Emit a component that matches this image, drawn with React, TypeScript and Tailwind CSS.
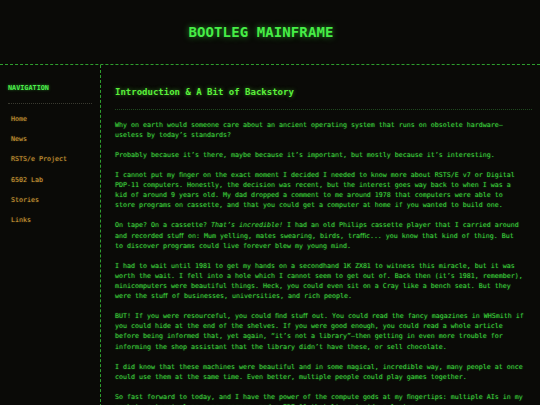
const mono = 'font-["DejaVu_Sans_Mono","Liberation_Mono",monospace]'

const navItems = ['Home', 'News', 'RSTS/e Project', '6502 Lab', 'Stories', 'Links']

function Sidebar() {
  return (
    <aside className="w-[101px] shrink-0 border-r border-dashed border-[#2e9e2e] pl-2 pr-2 pt-[18px]">
      <h2 className="text-[6.8px] leading-[10px] font-bold text-[#4cf04c] pb-[10px] border-b border-dotted border-[#3a3a30] [text-shadow:0_0_3px_rgba(80,255,80,0.5)]">
        NAVIGATION
      </h2>
      <ul className="flex flex-col gap-[10.2px] mt-[10px] pl-[3px]">
        {navItems.map(item => (
          <li key={item} className="text-[6.65px] leading-[10px] text-[#d7a23a] [text-shadow:0_0_2px_rgba(230,170,60,0.4)]">
            {item}
          </li>
        ))}
      </ul>
    </aside>
  )
}

// the original copy uses typographic ligatures (ﬁ, ﬀ, ﬃ), keep them so lines wrap the same
const paras: React.ReactNode[] = [
  'Why on earth would someone care about an ancient operating system that runs on obsolete hardware—useless by today’s standards?',
  'Probably because it’s there, maybe because it’s important, but mostly because it’s interesting.',
  'I cannot put my ﬁnger on the exact moment I decided I needed to know more about RSTS/E v7 or Digital PDP-11 computers. Honestly, the decision was recent, but the interest goes way back to when I was a kid of around 9 years old. My dad dropped a comment to me around 1978 that computers were able to store programs on cassette, and that you could get a computer at home if you wanted to build one.',
  <>On tape? On a cassette? <em>That’s incredible!</em> I had an old Philips cassette player that I carried around and recorded stuﬀ on: Mum yelling, mates swearing, birds, traﬃc... you know that kind of thing. But to discover programs could live forever blew my young mind.</>,
  'I had to wait until 1981 to get my hands on a secondhand 1K ZX81 to witness this miracle, but it was worth the wait. I fell into a hole which I cannot seem to get out of. Back then (it’s 1981, remember), minicomputers were beautiful things. Heck, you could even sit on a Cray like a bench seat. But they were the stuﬀ of businesses, universities, and rich people.',
  'BUT! If you were resourceful, you could ﬁnd stuﬀ out. You could read the fancy magazines in WHSmith if you could hide at the end of the shelves. If you were good enough, you could read a whole article before being informed that, yet again, “it’s not a library”—then getting in even more trouble for informing the shop assistant that the library didn’t have these, or sell chocolate.',
  'I did know that these machines were beautiful and in some magical, incredible way, many people at once could use them at the same time. Even better, multiple people could play games together.',
  'So fast forward to today, and I have the power of the compute gods at my ﬁngertips: multiple AIs in my pocket, a terminal on every screen, and a PDP-11 that lives inside a laptop.',
]

export default function App() {
  return (
    <div className={`${mono} min-h-screen bg-[#0a0a07] text-[#3ed83e]`}>
      <header className="h-[65px] flex items-center justify-center pr-[18px] border-b border-dashed border-[#2e9e2e]">
        <h1 className="text-[14px] font-bold tracking-[0.1px] text-[#46ee46] [text-shadow:0_0_6px_rgba(70,255,70,0.55)]">
          BOOTLEG MAINFRAME
        </h1>
      </header>
      <div className="flex">
        <Sidebar />
        <main className="flex-1 pl-[14px] pr-2 pt-[21px]">
          <h2 className="text-[9px] leading-[12px] font-bold text-[#5af03a] pb-[11px] border-b border-dotted border-[#1f4a1f] [text-shadow:0_0_4px_rgba(90,240,60,0.5)]">
            Introduction &amp; A Bit of Backstory
          </h2>
          <div className="mt-[9.5px] max-w-[102.6ch] text-[6.65px] leading-[10.1px] [text-shadow:0_0_2px_rgba(60,220,60,0.45)]">
            {paras.map((p, i) => (
              <p key={i} className="mb-[10.1px]">{p}</p>
            ))}
          </div>
        </main>
      </div>
    </div>
  )
}
